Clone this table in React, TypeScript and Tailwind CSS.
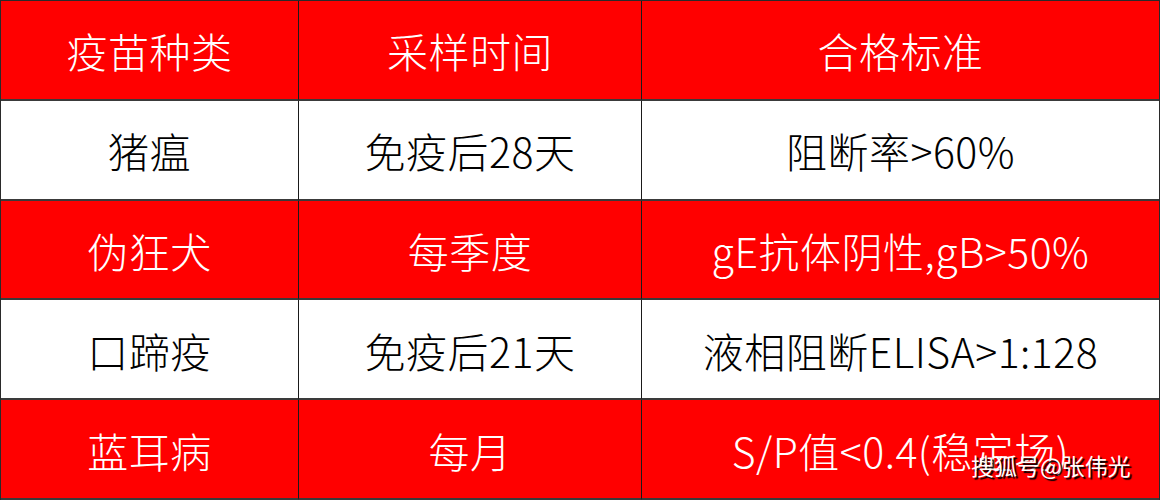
import React from "react";

const rows = [
  { head: true, cells: ["疫苗种类", "采样时间", "合格标准"] },
  { head: false, cells: ["猪瘟", "免疫后28天", "阻断率>60%"] },
  { head: true, cells: ["伪狂犬", "每季度", "gE抗体阴性,gB>50%"] },
  { head: false, cells: ["口蹄疫", "免疫后21天", "液相阻断ELISA>1:128"] },
  { head: true, cells: ["蓝耳病", "每月", "S/P值<0.4(稳定场)"] },
];

const App = () => {
  return (
    <div
      className="relative w-[1160px] h-[500px] bg-white overflow-hidden"
      style={{ fontFamily: '"Noto Sans CJK SC", "Noto Sans", sans-serif' }}
    >
      <div className="grid grid-cols-[298px_343px_1fr] grid-rows-5 h-full border-l border-t border-r border-[#2a2a2a]">
        {rows.map((row, i) =>
          row.cells.map((cell, j) => (
            <div
              key={i + "-" + j}
              className={
                "flex items-center justify-center pt-[2px] text-[41px] leading-none font-light tracking-[0.5px] border-b-2 border-[#3a3a3a] " +
                (j < 2 ? "border-r border-r-[#1a1a1a] " : "") +
                (row.head ? "bg-[#ff0000] text-white" : "bg-white text-black")
              }
            >
              {cell}
            </div>
          ))
        )}
      </div>
      <div className="absolute left-[971px] top-[454px] text-[23px] leading-none text-white [text-shadow:2px_2px_1px_#000]">
        搜狐号@张伟光
      </div>
    </div>
  );
};

export default App;
